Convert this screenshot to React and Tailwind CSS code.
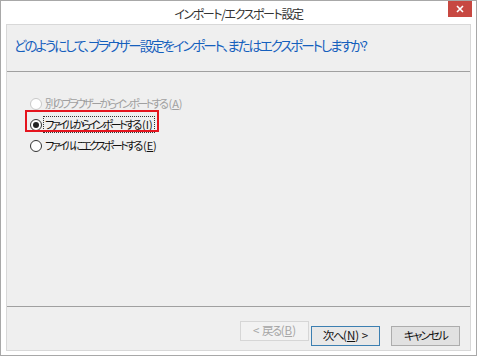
import React from "react";

const jp = "font-['Meiryo_UI','Noto_Sans_CJK_JP',sans-serif] [font-feature-settings:'palt']";

const Radio = ({ checked, disabled }) => (
  <span
    className={`flex items-center justify-center w-[12px] h-[12px] rounded-full border bg-white shrink-0 ${
      disabled ? "border-[#c8c8c8] bg-[#f4f4f4]" : "border-[#333]"
    }`}
  >
    {checked && <span className="w-[6px] h-[6px] rounded-full bg-[#222]" />}
  </span>
);

// accelerator key like (A), kept at normal letter spacing
const Accel = ({ k }) => (
  <span className="tracking-normal">
    (<span className="underline">{k}</span>)
  </span>
);

const Option = ({ label, accel, checked, disabled, focused }) => (
  <div className="flex items-center h-[21px]">
    <Radio checked={checked} disabled={disabled} />
    <span
      className={`ml-[2px] px-[1px] text-[11px] leading-[15px] whitespace-nowrap ${
        disabled ? "text-[#a0a0a0]" : "text-[#111]"
      } ${focused ? "outline outline-1 outline-dotted outline-[#333]" : ""}`}
    >
      <span className="tracking-[-2.5px]">{label}</span>
      <span className="ml-[2px]">
        <Accel k={accel} />
      </span>
    </span>
  </div>
);

const Button = ({ children, disabled, primary }) => (
  <button
    className={`w-[69px] h-[20px] text-[11.5px] leading-none border whitespace-nowrap ${
      disabled
        ? "border-[#d6d6d6] bg-[#f2f2f2] text-[#a6a6a6]"
        : primary
        ? "border-[#3c7fb1] bg-[#e8e8e8] text-[#111]"
        : "border-[#acacac] bg-[#e1e1e1] text-[#111]"
    }`}
  >
    {children}
  </button>
);

export default function App() {
  return (
    <div className={`w-[477px] h-[356px] bg-white border border-[#a8a8a8] flex flex-col ${jp}`}>
      {/* title bar */}
      <div className="relative h-[23px] flex items-center justify-center">
        <span className="text-[12px] tracking-[-1.4px] text-[#333] mt-[3px]">インポート/エクスポート設定</span>
        <div className="absolute right-[4px] top-0 w-[24px] h-[16px] bg-[#c74841] flex items-center justify-center">
          <svg width="8" height="8" viewBox="0 0 8 8">
            <path d="M1 1L7 7M7 1L1 7" stroke="white" strokeWidth="1.6" />
          </svg>
        </div>
      </div>

      {/* body */}
      <div className="mx-[5px] mb-[4px] flex-1 flex flex-col border border-[#d8d8d8] bg-[#efefef]">
        <div className="h-[47px] border-b border-[#a0a0a0] pl-[7px] pt-[7px]">
          <span className="text-[13.5px] tracking-[-2.1px] text-[#1560bd] leading-[18px] whitespace-nowrap">
            どのようにして、ブラウザー設定をインポート、またはエクスポートしますか?
          </span>
        </div>

        <div className="flex-1 pl-[23px] pt-[21px]">
          <Option label="別のブラウザーからインポートする" accel="A" disabled />
          <div className="relative">
            <Option label="ファイルからインポートする" accel="I" checked focused />
            <div className="absolute left-[-5px] top-[-4px] w-[134px] h-[22px] border-2 border-[#e5141e]" />
          </div>
          <Option label="ファイルにエクスポートする" accel="E" />
        </div>

        <div className="h-[44px] border-t border-[#a0a0a0] flex items-start justify-end pt-[14px] pr-[10px]">
          <Button disabled>
            &lt; <span className="tracking-[-1.5px]">戻る</span>
            <Accel k="B" />
          </Button>
          <div className="ml-[2px]">
            <Button primary>
              <span className="tracking-[-1.5px]">次へ</span>
              <Accel k="N" /> &gt;
            </Button>
          </div>
          <div className="ml-[11px]">
            <Button>
              <span className="tracking-[-1.8px]">キャンセル</span>
            </Button>
          </div>
        </div>
      </div>
    </div>
  );
}
